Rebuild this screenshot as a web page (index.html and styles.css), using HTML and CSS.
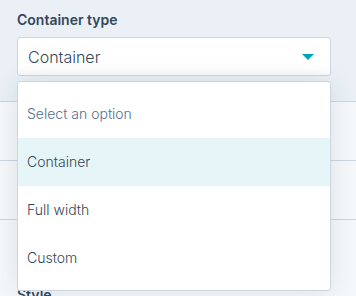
FILE: index.html
```html
<!DOCTYPE html>
<html>
<head>
<meta charset="utf-8">
<link rel="stylesheet" href="styles.css">
</head>
<body>
<div class="page">
  <div class="header">
    <div class="label">Container type</div>
    <div class="select">
      <span class="value">Container</span>
      <svg class="caret" width="12" height="6" viewBox="0 0 12 6"><path d="M0 0 L12 0 L6 6 Z" fill="#00a4bd"/></svg>
    </div>
  </div>
  <div class="row"></div>
  <div class="row"></div>
  <div class="section">
    <div class="label">Style</div>
  </div>
  <ul class="menu">
    <li class="option placeholder">Select an option</li>
    <li class="option active">Container</li>
    <li class="option">Full width</li>
    <li class="option">Custom</li>
  </ul>
</div>
</body>
</html>
```
FILE: styles.css
```css
* { box-sizing: border-box; }
html, body { margin: 0; padding: 0; }
body {
  background: #f5f8fa;
  font-family: Inter, "Noto Sans", sans-serif;
  color: #33475b;
  width: 356px;
  height: 296px;
  overflow: hidden;
}
.page { position: relative; height: 296px; }
.header {
  background: #eaf0f6;
  height: 102px;
  border-bottom: 1px solid #cbd6e2;
  padding: 10px 25px 0 17px;
}
.label {
  font-size: 14px;
  font-weight: 600;
  line-height: 20px;
  color: #33475b;
}
.select {
  margin-top: 7px;
  height: 39px;
  background: #fff;
  border: 1px solid #cbd6e2;
  border-radius: 3px;
  display: flex;
  align-items: center;
  justify-content: space-between;
  padding: 0 16px 0 10px;
  box-shadow: inset 0 -6px 6px -4px rgba(45, 62, 80, 0.04);
}
.value { font-size: 16px; line-height: 22px; font-weight: 300; }
.caret { display: block; margin-top: 1px; }
.row {
  height: 59px;
  border-bottom: 1px solid #cbd6e2;
}
.section { padding: 65px 17px 0; }
.menu {
  position: absolute;
  top: 81px;
  left: 17px;
  width: 314px;
  margin: 0;
  padding: 8px 0;
  list-style: none;
  background: #fff;
  border: 1px solid #cbd6e2;
  border-radius: 3px;
  box-shadow: 0 1px 24px 0 rgba(45, 62, 80, 0.12);
}
.option {
  height: 48px;
  display: flex;
  align-items: center;
  padding: 0 9px;
  font-size: 14px;
  line-height: 20px;
  font-weight: 300;
  color: #33475b;
}
.option.placeholder { color: #516f90; }
.option.active { background: #e5f5f8; }
```
